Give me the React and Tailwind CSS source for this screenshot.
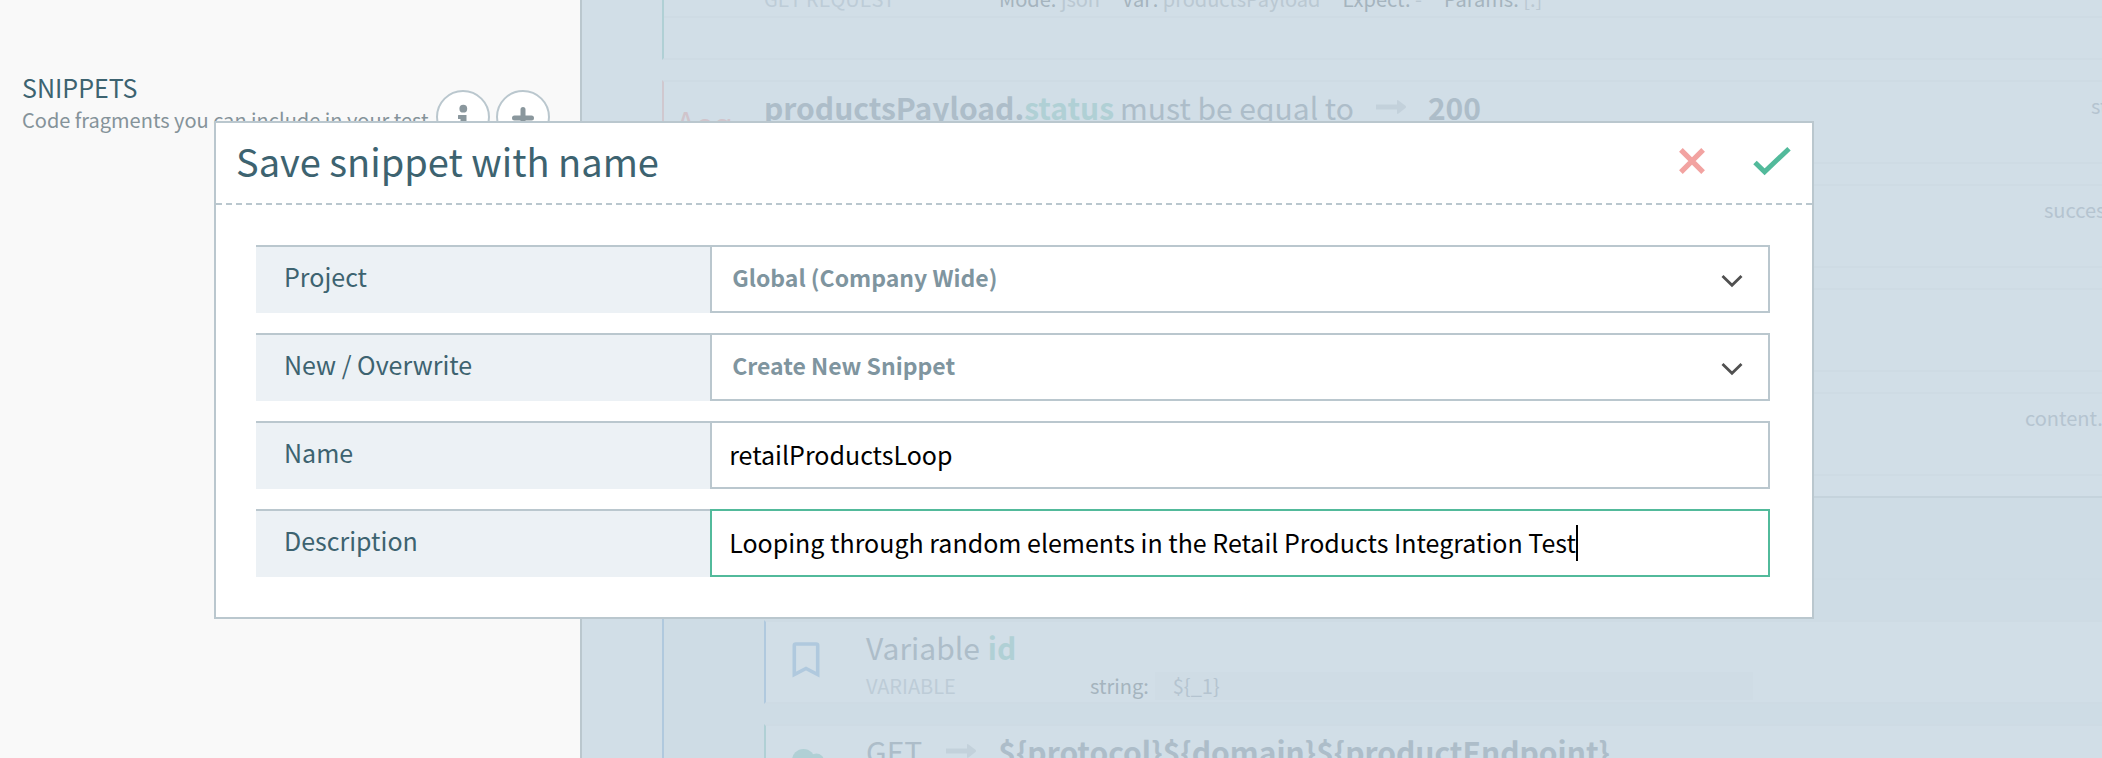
const INK = "text-[#adbdc9]";
const FAINT = "text-[#bdccd7]";

function Arrow() {
  return (
    <svg viewBox="0 0 30 16" className="h-4 w-[30px] shrink-0 fill-[#c3d1db]" aria-hidden="true">
      <path d="M0 5.500h21V2q0-1.500 1.500-.6l7 5.400q1 1.200 0 2.300l-7 5.500q-1.500 1-1.500-.6v-3.500H0z" />
    </svg>
  );
}

function Bookmark() {
  return (
    <svg viewBox="0 0 28 36" className="h-9 w-7 fill-none stroke-[#b0c9de]" strokeWidth="3.600" aria-hidden="true">
      <path d="M2.300 32.500V3.500q0-1.500 1.500-1.500h20.400q1.500 0 1.500 1.500v29L14 26.500z" />
    </svg>
  );
}

function Cloud() {
  return (
    <svg viewBox="0 0 40 34" className="h-[34px] w-10 fill-[#b0d0d5]" aria-hidden="true">
      <circle cx="15.500" cy="11.500" r="11.500" />
      <circle cx="28.500" cy="12" r="7.500" />
      <circle cx="8.500" cy="20" r="8.500" />
      <circle cx="31" cy="19" r="8.500" />
      <path d="M8.500 17H31v10.500H8.500z" />
    </svg>
  );
}

function Cross() {
  return (
    <svg viewBox="0 0 28 28" className="size-7 fill-none stroke-[#f2a3a1]" strokeWidth="5.200" aria-hidden="true">
      <path d="M2.900 2.900l22.200 22.200M25.100 2.900L2.900 25.100" />
    </svg>
  );
}

function Check() {
  return (
    <svg viewBox="0 0 40 30" className="h-[30px] w-10 fill-none stroke-[#52ba9b]" strokeWidth="5" aria-hidden="true">
      <path d="M3 16.500l9.600 9.200L37 2.700" />
    </svg>
  );
}

function Chevron() {
  return (
    <svg viewBox="0 0 22 14" className="pointer-events-none absolute top-[29px] right-[27px] h-3.5 w-[22px] fill-none stroke-[#505050]" strokeWidth="2.800" aria-hidden="true">
      <path d="M1.500 2L11 11.300 20.500 2" />
    </svg>
  );
}

function Step({ accent, icon, title, meta, path, pathWidth }) {
  return (
    <article className={`flex h-[84px] border-y-2 border-y-[#cedbe4] bg-[#d1dee7] ${accent}`}>
      <div className="flex w-[100px] shrink-0 items-center pl-3">{icon}</div>
      <div className="min-w-0 flex-1 pt-[5px] whitespace-nowrap">
        <h3 className={`flex items-center text-[30px] leading-10 ${INK}`}>{title}</h3>
        <div className={`flex text-[20px] leading-[38px] ${FAINT}`}>{meta}</div>
      </div>
      <div className={`shrink-0 pt-1 text-[20px] leading-10 whitespace-nowrap text-[#b5c4d0] ${pathWidth || ""}`}>{path}</div>
    </article>
  );
}

function Meta({ name, value }) {
  return (
    <span className="mr-[22px]">
      <span className="text-[#a5b4be]">{name}:</span> {value}
    </span>
  );
}

const RED = "border-l-2 border-l-[#d0c8cf]";
const TEAL = "border-l-2 border-l-[#b0d0d5]";
const BLUE = "border-l-2 border-l-[#b0c9de]";

function Canvas() {
  return (
    <main className="min-w-0 flex-1 overflow-hidden bg-[#d1dee7] pl-20">
      <div className="-mt-[68px] flex flex-col gap-5">
        <section className={`h-32 border-b-2 border-b-[#cedbe4] ${TEAL}`}>
          <div className="flex h-[86px] items-end border-b-2 border-[#cedbe4] pl-[100px] text-[20px] leading-[34px] whitespace-nowrap">
            <span className={`w-[235px] shrink-0 ${FAINT}`}>GET REQUEST</span>
            <span className="text-[#bac8d2]">
              <Meta name="Mode" value="json" />
              <Meta name="Var" value="productsPayload" />
              <Meta name="Expect" value="-" />
              <Meta name="Params" value="[.]" />
            </span>
          </div>
        </section>
        <Step
          accent={RED}
          icon={<span className="text-[32px] leading-10 text-[#d0c4cb]">Aeq</span>}
          title={
            <>
              <b>productsPayload.</b>
              <b className="text-[#b0d0d5]">status</b>
              <span className="mr-[22px] ml-1.5">must be equal to</span>
              <Arrow />
              <b className="ml-[22px]">200</b>
            </>
          }
          path="status"
          pathWidth="w-[11px]"
        />
        <Step accent={RED} path="success" pathWidth="w-[58px]" />
        <Step accent={RED} />
        <Step accent={RED} path="content.id" pathWidth="w-[77px]" />
        <section className={`border-t-2 border-t-[#c5d3dc] bg-[#cedce5] ${BLUE}`}>
          <div className="h-[82px] border-b-2 border-[#cddbe4]" />
          <div className="flex flex-col gap-5 pt-10 pl-[100px]">
            <Step
              accent={BLUE}
              icon={<span className="pb-1 pl-3.5"><Bookmark /></span>}
              title={
                <>
                  Variable <b className="ml-2 text-[#b0d0d5]">id</b>
                </>
              }
              meta={
                <>
                  <span className="w-[224px] shrink-0">VARIABLE</span>
                  <span className="text-[#a5b4be]">string:</span>
                  <span className="mt-[5px] ml-[6px] h-7 w-[598px] bg-[#cfdce5] pl-[18px] leading-7 text-[#b5c4d0]">{"${_1}"}</span>
                </>
              }
            />
            <Step
              accent={TEAL}
              icon={<span className="pl-2.5"><Cloud /></span>}
              title={
                <>
                  <span className="mr-6">GET</span>
                  <Arrow />
                  <b className="ml-[22px]">{"${protocol}${domain}${productEndpoint}"}</b>
                </>
              }
            />
          </div>
        </section>
      </div>
    </main>
  );
}

function Sidebar() {
  const round =
    "flex size-[54px] items-center justify-center rounded-full border-2 border-[#bac7ce] bg-white text-[#8a979d]";
  return (
    <aside className="w-[582px] shrink-0 border-r-2 border-[#bac7ce] bg-[#f9f9f9] pt-[69px] pr-[30px] pl-[22px]">
      <div className="flex justify-between">
        <div className="whitespace-nowrap">
          <h2 className="text-[25px] leading-9 text-[#3d6370]">SNIPPETS</h2>
          <p className="text-[20px] leading-[30px] text-[#85939a]">Code fragments you can include in your test</p>
        </div>
        <div className="flex gap-[6px] pt-[21px]">
          <button type="button" aria-label="Info" className={round}>
            <svg viewBox="0 0 16 30" className="h-[30px] w-4 fill-current" aria-hidden="true">
              <circle cx="8.300" cy="6.700" r="3.900" />
              <path d="M3.500 13h8v12H14v3H3v-3h2.500v-8h-2q-.5 0-.5-.5v-3q0-.5.5-.5z" />
            </svg>
          </button>
          <button type="button" aria-label="Add snippet" className={round}>
            <svg viewBox="0 0 24 24" className="size-6 fill-none stroke-current" strokeWidth="5" strokeLinecap="round" aria-hidden="true">
              <path d="M12 4.500v17M3.500 13h17" />
            </svg>
          </button>
        </div>
      </div>
    </aside>
  );
}

function Row({ id, label, children }) {
  return (
    <div className="flex h-[68px]">
      <label htmlFor={id} className="w-[30%] border-t-2 border-[#bac7ce] bg-[#ecf1f5] pl-7 text-[25px] leading-[58px] text-[#3d6370]">
        {label}
      </label>
      <div className="relative w-[70%]">{children}</div>
    </div>
  );
}

const SELECT =
  "size-full appearance-none border-2 border-[#bac7ce] bg-white pb-1 pl-5 text-[23px] font-bold text-[#7f959f] outline-none";
const INPUT = "size-full border-2 bg-white pb-0.5 pl-[17px] text-[25px] text-black outline-none";

function SaveDialog() {
  return (
    <div className="absolute inset-0 pt-[121px] pr-[288px] pl-[214px]">
      <form role="dialog" aria-labelledby="dialog-title" className="border-2 border-[#bac7ce] bg-white">
        <header className="flex h-[82px] items-center justify-between border-b-2 border-dashed border-[#bac7ce] pr-5 pb-1 pl-5">
          <h1 id="dialog-title" className="text-[38px] leading-[76px] text-[#3d6370]">
            Save snippet with name
          </h1>
          <div className="flex items-center gap-[46px]">
            <button type="button" aria-label="Cancel"><Cross /></button>
            <button type="button" aria-label="Save"><Check /></button>
          </div>
        </header>
        <div className="flex flex-col gap-5 py-10 pr-[42px] pl-10">
          <Row id="project" label="Project">
            <select id="project" className={SELECT}>
              <option>Global (Company Wide)</option>
            </select>
            <Chevron />
          </Row>
          <Row id="mode" label="New / Overwrite">
            <select id="mode" className={SELECT}>
              <option>Create New Snippet</option>
            </select>
            <Chevron />
          </Row>
          <Row id="name" label="Name">
            <input id="name" type="text" defaultValue="retailProductsLoop" className={`${INPUT} border-[#bac7ce]`} />
          </Row>
          <Row id="description" label="Description">
            <input
              id="description"
              type="text"
              defaultValue="Looping through random elements in the Retail Products Integration Test"
              className={`${INPUT} border-[#52ba9b] caret-transparent`}
            />
            <span className="absolute top-4 left-[866px] h-9 w-[2px] bg-black" />
          </Row>
        </div>
      </form>
    </div>
  );
}

export default function App() {
  return (
    <div className="relative flex h-screen overflow-hidden font-['Noto_Sans_CJK_SC',sans-serif]">
      <Sidebar />
      <Canvas />
      <SaveDialog />
    </div>
  );
}
